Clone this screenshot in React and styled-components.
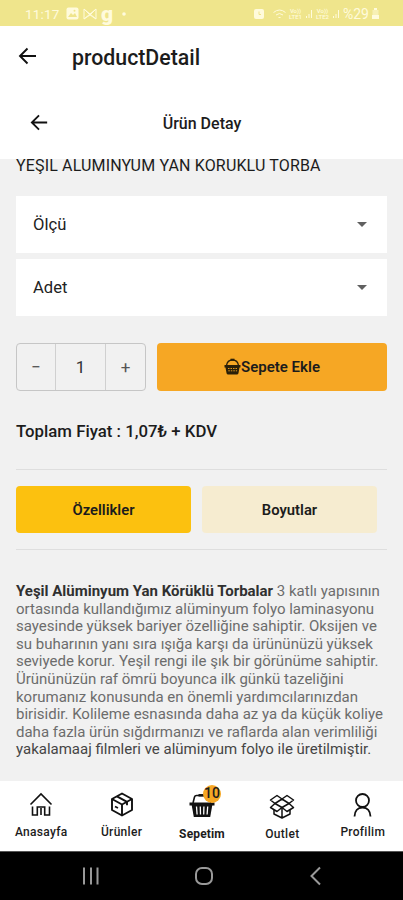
import React, { useState } from 'react';
import styled, { createGlobalStyle } from 'styled-components';

const GlobalStyle = createGlobalStyle`
  * {
    box-sizing: border-box;
  }

  body {
    margin: 0;
    font-family: Roboto, 'Liberation Sans', sans-serif;
    background-color: #f1f1f1;
  }

  button {
    padding: 0;
    border: none;
    background: none;
    font-family: inherit;
    color: inherit;
  }
`;

const Screen = styled.div`
  display: flex;
  flex-direction: column;
  width: 403px;
  height: 900px;
  overflow: hidden;
  background-color: #f1f1f1;
  color: #1c1c1c;
`;

const StatusBar = styled.div`
  display: flex;
  justify-content: space-between;
  flex-shrink: 0;
  height: 26px;
  padding: 1px 24px 0 25px;
  background-color: #efe58c;
  color: #fffbdc;
  font-size: 13px;
`;

const StatusGroup = styled.div`
  display: flex;
  align-items: center;
  gap: ${({ $gap }) => $gap}px;

  svg {
    display: block;
  }
`;

const Clock = styled.span`
  width: 37px;
  font-size: 13.5px;
  letter-spacing: 0.2px;
`;

const AppMark = styled.span`
  width: 12px;
  font-size: 21px;
  line-height: 20px;
  font-weight: 900;
`;

const Network = styled.span`
  font-size: 6px;
  line-height: 6px;
  font-weight: 500;
  text-align: center;
`;

const Battery = styled.span`
  font-size: 14px;
`;

const TopBar = styled.header`
  display: flex;
  align-items: center;
  flex-shrink: 0;
  height: 62px;
  padding: 0 16px 2px;
  gap: 32px;
  background-color: #fff;
`;

const BackButton = styled.button`
  display: flex;
  align-items: center;
  width: 24px;
  height: 24px;
`;

const TopTitle = styled.h1`
  margin: 0;
  padding-top: 2px;
  font-size: 21.3px;
  font-weight: 500;
`;

const SubBar = styled.div`
  display: grid;
  grid-template-columns: 24px 1fr 24px;
  align-items: center;
  flex-shrink: 0;
  height: 71px;
  padding: 0 27px 2px 28px;
  background-color: #fff;
`;

const SubTitle = styled.h2`
  margin: 0;
  padding-top: 1px;
  font-size: 16px;
  font-weight: 500;
  text-align: center;
`;

const Content = styled.main`
  display: flex;
  flex-direction: column;
  flex: 1;
  min-height: 0;
  padding: 0 16px;
  overflow: hidden;
`;

const ProductName = styled.h3`
  height: 37px;
  margin: 0;
  padding-top: 1px;
  font-size: 16px;
  line-height: 11px;
  font-weight: 400;
  letter-spacing: 0.16px;
  white-space: nowrap;
`;

const Select = styled.button`
  display: flex;
  align-items: center;
  justify-content: space-between;
  flex-shrink: 0;
  height: 57px;
  margin-bottom: 6px;
  padding: 0 20px 0 17px;
  background-color: #fff;
  font-size: 16.6px;
  color: #222;
`;

const Caret = styled.span`
  border: 5.5px solid transparent;
  border-top-color: #606060;
  border-bottom: none;
`;

const BuyRow = styled.div`
  display: flex;
  gap: 11px;
  flex-shrink: 0;
  height: 48px;
  margin-top: 21px;
`;

const Stepper = styled.div`
  display: grid;
  grid-template-columns: 38px 1fr 39px;
  width: 130px;
  border: 1px solid #c6c6c6;
  border-radius: 4px;
`;

const StepButton = styled.button`
  font-size: 17px;
  color: #555;
`;

const Quantity = styled.span`
  display: flex;
  align-items: center;
  justify-content: center;
  border: solid #d0d0d0;
  border-width: 0 1px;
  font-size: 17px;
  color: #333;
`;

const AddButton = styled.button`
  display: flex;
  align-items: center;
  justify-content: center;
  flex: 1;
  border-radius: 4px;
  background-color: #f6a724;
  font-size: 15px;
  font-weight: 600;
`;

const Price = styled.p`
  margin: 30px 0 0;
  font-size: 16.8px;
  line-height: 20px;
  font-weight: 500;
`;

const Tabs = styled.div`
  display: flex;
  gap: 11px;
  flex-shrink: 0;
  height: 81px;
  margin-top: 28px;
  padding: 16px 10px 16px 0;
  border: solid #dedede;
  border-width: 1px 0;
`;

const Tab = styled.button`
  flex: 1;
  border-radius: 4px;
  background-color: ${({ $active }) => ($active ? '#fcc10f' : '#f6ecd0')};
  font-size: 14.8px;
  font-weight: 600;
`;

const Description = styled.p`
  margin: 33px 0 0;
  font-size: 15px;
  line-height: 17.6px;
  color: #6c6c6c;
`;

const Line = styled.span`
  display: block;
  color: ${({ $dark }) => ($dark ? '#454545' : 'inherit')};
  white-space: nowrap;

  b {
    color: #303030;
  }
`;

const TabBar = styled.nav`
  display: grid;
  grid-template-columns: repeat(5, 1fr);
  flex-shrink: 0;
  height: 70px;
  padding-left: 1px;
  background-color: #fff;
`;

const NavItem = styled.a`
  display: flex;
  flex-direction: column;
  align-items: center;
  gap: 8px;
  padding-top: ${({ $low }) => ($low ? 12 : 10)}px;
  font-size: 12px;
  line-height: 14px;
  font-weight: ${({ $active }) => ($active ? 700 : 500)};
  letter-spacing: ${({ $active }) => ($active ? 0.15 : 0.3)}px;
`;

const IconBox = styled.span`
  position: relative;
  display: flex;
  width: 26px;
  height: 26px;
`;

const Badge = styled.span`
  position: absolute;
  top: -8px;
  right: -6px;
  width: 18px;
  height: 18px;
  border-radius: 50%;
  background-color: #f6a724;
  font-size: 14px;
  line-height: 17px;
  font-weight: 500;
  letter-spacing: 0;
  text-align: center;
`;

const SystemBar = styled.div`
  display: flex;
  align-items: center;
  justify-content: space-between;
  flex-shrink: 0;
  height: 49px;
  padding: 0 77px 0 81px;
  border-top: 1px solid #555;
  background-color: #000;
  color: #999;
`;

const Arrow = ({ size = 24 }) => (
  <svg width={size} height={size} viewBox="0 0 24 24" fill="none" stroke="#111" strokeWidth="1.9">
    <path d="M20 12H4.500M11.500 4.500L4 12l7.500 7.500" />
  </svg>
);

const Basket = () => (
  <svg width="26" height="26" viewBox="0 0 26 26" fill="none" stroke="#111" strokeWidth="1.6">
    <path d="M4 10l1.500-6q.4-1.500 2-1.500H18q1.500 0 2 1.500l1.800 6" />
    <path d="M9.500 2.300h7" strokeWidth="2.500" />
    <path d="M.5 9.500h25v3H.5z" fill="#111" stroke="none" />
    <path d="M2.500 11h21l-2.300 13H4.800z" fill="#111" stroke="none" />
    <path d="M7.500 13.500l.6 8M11.300 13.500l.2 8M14.900 13.500l-.2 8M18.700 13.500l-.6 8" stroke="#fff" strokeWidth="1.300" />
  </svg>
);

const CartBasket = () => (
  <svg width="17" height="18" viewBox="0 0 17 18" fill="none" stroke="#2b2008">
    <path d="M2.500 7.500C3 4 5 2 8.500 2s5.500 2 6 5.500" strokeWidth="1.300" />
    <path d="M6.500 1.700h4" strokeWidth="2" />
    <path d="M.5 7h16v2.500h-1L14.500 15q-.2 1.500-1.700 1.500H4.200Q2.700 16.500 2.500 15l-1-5.500h-1z" fill="#2b2008" stroke="none" />
    <path d="M4 10.500h9.500M4.300 12.800h8.800" stroke="#f6a724" strokeWidth="0.900" strokeDasharray="1.500 1" />
  </svg>
);

const Home = () => (
  <svg width="26" height="26" viewBox="0 0 26 26" fill="none" stroke="#111" strokeWidth="1.6">
    <path d="M2.500 13.500L13 3l10.500 10.500" />
    <path d="M4.500 15.500V24h4.800v-8h7.400v8h4.800v-8.500M13 17v7" />
  </svg>
);

const Box = () => (
  <svg width="26" height="26" viewBox="0 0 26 26" fill="none" stroke="#111" strokeWidth="1.9" strokeLinejoin="round">
    <path d="M13 2.500l10 5.500v11l-10 5.500L3 19V8z" />
    <path d="M3 8l10 5.500L23 8M13 13.500v11M8 5.300l10 5.500v3.500M6 15.500l3 1.500" />
  </svg>
);

const OpenBox = () => (
  <svg width="26" height="26" viewBox="0 0 26 26" fill="none" stroke="#111" strokeWidth="1.500" strokeLinejoin="round">
    <path d="M13 6L8 2.500 1.500 7 6 10.500 13 6l7 4.500L24.500 7 18 2.500z" />
    <path d="M6 10.500L1.500 14.500 8 18.500l5-4 5 4 6.500-4-4.500-4-7 4z" />
    <path d="M5 17v4l8 4 8-4v-4M13 15v10" />
  </svg>
);

const Person = () => (
  <svg width="26" height="26" viewBox="0 0 26 26" fill="none" stroke="#111" strokeWidth="1.800">
    <circle cx="12.500" cy="9.500" r="6.500" />
    <path d="M4.500 25.500c.2-5.500 3.200-9 8-9s7.800 3.500 8 9" />
  </svg>
);

const SignalBars = () => (
  <svg width="8" height="10" viewBox="0 0 8 10" stroke="currentColor">
    <path d="M1.500 9V7M4 9V5M6.500 9V1" />
  </svg>
);

const navItems = [
  { label: 'Anasayfa', icon: <Home /> },
  { label: 'Ürünler', icon: <Box /> },
  { label: 'Sepetim', icon: <Basket />, badge: 10, active: true, low: true },
  { label: 'Outlet', icon: <OpenBox />, low: true },
  { label: 'Profilim', icon: <Person /> },
];

const App = () => {
  const [quantity, setQuantity] = useState(1);
  const [tab, setTab] = useState('features');

  return (
    <>
      <GlobalStyle />
      <Screen>
        <StatusBar>
          <StatusGroup $gap={4}>
            <Clock>11:17</Clock>
            <svg width="13" height="13" viewBox="0 0 13 13">
              <rect x="0.500" y="0.500" width="12" height="12" rx="2" fill="currentColor" />
              <path d="M2 10l3-4 2 2 2-2 2 4z" fill="#efe58c" />
              <circle cx="8.500" cy="3.800" r="1" fill="#efe58c" />
            </svg>
            <svg width="14" height="12" viewBox="0 0 14 12" fill="none" stroke="currentColor">
              <path d="M1 1v10l6-4 6 4V1L7 7z M1 1l12 10M13 1L1 11" />
            </svg>
            <AppMark>g</AppMark>
            <svg width="12" height="4" viewBox="0 0 12 4">
              <circle cx="7" cy="2" r="1.800" fill="currentColor" />
            </svg>
          </StatusGroup>
          <StatusGroup $gap={3}>
            <svg width="16" height="12" viewBox="0 0 16 12">
              <rect x="0" y="1" width="10" height="10" rx="2" fill="currentColor" />
              <path d="M5 3.500v3h2" stroke="#efe58c" fill="none" />
            </svg>
            <svg width="13" height="10" viewBox="0 0 13 10" fill="none" stroke="currentColor">
              <path d="M.5 3.500q6-5 12 0M3 6q3.500-3 7 0M5.500 8.500h2" />
            </svg>
            <Network>
              Vo))
              <br />
              LTE1
            </Network>
            <SignalBars />
            <Network>
              Vo))
              <br />
              LTE2
            </Network>
            <SignalBars />
            <Battery>%29</Battery>
            <svg width="7" height="11" viewBox="0 0 7 11" fill="currentColor">
              <path d="M2 0h3v2H2zM0 7h7v4H0z" />
              <path d="M.5 2h6v5h-6z" opacity="0.500" />
            </svg>
          </StatusGroup>
        </StatusBar>

        <TopBar>
          <BackButton type="button" aria-label="Geri">
            <Arrow />
          </BackButton>
          <TopTitle>productDetail</TopTitle>
        </TopBar>
        <SubBar>
          <BackButton type="button" aria-label="Geri">
            <Arrow size={23} />
          </BackButton>
          <SubTitle>Ürün Detay</SubTitle>
        </SubBar>

        <Content>
          <ProductName>YEŞİL ALÜMİNYUM YAN KÖRÜKLÜ TORBA</ProductName>
          <Select type="button">
            Ölçü
            <Caret />
          </Select>
          <Select type="button">
            Adet
            <Caret />
          </Select>
          <BuyRow>
            <Stepper>
              <StepButton type="button" onClick={() => setQuantity(Math.max(1, quantity - 1))}>
                −
              </StepButton>
              <Quantity>{quantity}</Quantity>
              <StepButton type="button" onClick={() => setQuantity(quantity + 1)}>
                +
              </StepButton>
            </Stepper>
            <AddButton type="button">
              <CartBasket />
              Sepete Ekle
            </AddButton>
          </BuyRow>
          <Price>Toplam Fiyat : 1,07₺ + KDV</Price>
          <Tabs>
            <Tab type="button" $active={tab === 'features'} onClick={() => setTab('features')}>
              Özellikler
            </Tab>
            <Tab type="button" $active={tab === 'sizes'} onClick={() => setTab('sizes')}>
              Boyutlar
            </Tab>
          </Tabs>
          <Description>
            <Line>
              <b>Yeşil Alüminyum Yan Körüklü Torbalar</b> 3 katlı yapısının
            </Line>
            <Line>ortasında kullandığımız alüminyum folyo laminasyonu</Line>
            <Line>sayesinde yüksek bariyer özelliğine sahiptir. Oksijen ve</Line>
            <Line>su buharının yanı sıra ışığa karşı da ürününüzü yüksek</Line>
            <Line>seviyede korur. Yeşil rengi ile şık bir görünüme sahiptir.</Line>
            <Line>Ürününüzün raf ömrü boyunca ilk günkü tazeliğini</Line>
            <Line>korumanız konusunda en önemli yardımcılarınızdan</Line>
            <Line>birisidir. Kolileme esnasında daha az ya da küçük koliye</Line>
            <Line>daha fazla ürün sığdırmanızı ve raflarda alan verimliliği</Line>
            <Line $dark>yakalamaaj filmleri ve alüminyum folyo ile üretilmiştir.</Line>
          </Description>
        </Content>

        <TabBar>
          {navItems.map(({ label, icon, badge, active, low }) => (
            <NavItem key={label} $active={active} $low={low}>
              <IconBox>
                {icon}
                {badge && <Badge>{badge}</Badge>}
              </IconBox>
              {label}
            </NavItem>
          ))}
        </TabBar>
        <SystemBar>
          <svg width="20" height="20" viewBox="0 0 20 20" stroke="currentColor" strokeWidth="2">
            <path d="M3 1.500v17M10 1.500v17M16.500 1.500v17" />
          </svg>
          <svg width="20" height="20" viewBox="0 0 20 20" fill="none" stroke="currentColor" strokeWidth="2">
            <rect x="2" y="2" width="16" height="16" rx="6" />
          </svg>
          <svg width="20" height="20" viewBox="0 0 20 20" fill="none" stroke="currentColor" strokeWidth="2">
            <path d="M14 1.500L5.500 10l8.500 8.500" />
          </svg>
        </SystemBar>
      </Screen>
    </>
  );
};

export default App;
